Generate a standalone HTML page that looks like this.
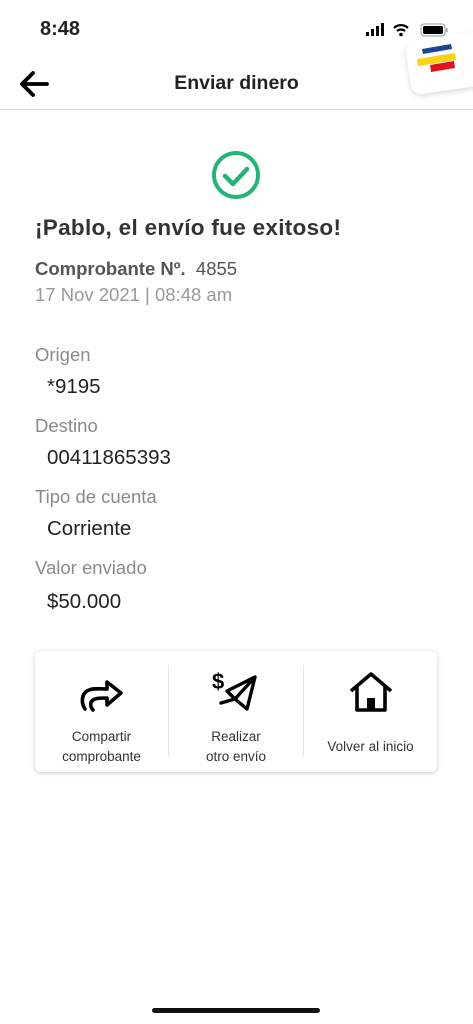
<!DOCTYPE html>
<html><head><meta charset="utf-8"><style>
*{margin:0;padding:0;box-sizing:border-box}
body{width:473px;height:1024px;background:#fff;font-family:"Liberation Sans",sans-serif;position:relative;overflow:hidden;color:#222}
.a{position:absolute;white-space:nowrap}
.lbl{font-size:18.5px;color:#8a8a8a;left:35px}
.val{font-size:20.5px;color:#222;left:47px}
.card{position:absolute;left:35px;top:651px;width:402px;height:121px;border-radius:6px;box-shadow:0 1px 5px rgba(0,0,0,.22);background:#fff}
.cap{position:absolute;font-size:13.5px;color:#333;text-align:center;line-height:20px}
.div{position:absolute;top:14px;width:1px;height:92px;background:#e6e6e6}
</style></head><body>
<div class="a" style="left:40px;top:18px;font-size:20px;font-weight:bold">8:48</div>
<svg class="a" style="left:366px;top:22px" width="90" height="18" viewBox="0 0 90 18">
<rect x="0" y="10" width="3" height="4" fill="#000"/><rect x="5" y="7" width="3" height="7" fill="#000"/><rect x="10" y="4" width="3" height="10" fill="#000"/><rect x="15" y="1" width="3" height="13" fill="#000"/>
<path d="M28 6a10 10 0 0 1 14 0M31 9a6 6 0 0 1 8 0" stroke="#000" stroke-width="2.2" fill="none"/><circle cx="35" cy="12.5" r="1.8" fill="#000"/>
<rect x="55" y="2" width="24" height="12" rx="3" fill="none" stroke="#999"/><rect x="57" y="4" width="20" height="8" rx="1.5" fill="#000"/><rect x="80" y="6" width="1.5" height="4" fill="#999"/>
</svg>
<div class="a" style="left:408px;top:36px;width:80px;height:54px;background:#fff;border-radius:10px;box-shadow:0 2px 6px rgba(0,0,0,.15);transform:rotate(-8deg)"></div>
<svg class="a" style="left:414px;top:40px" width="48" height="36" viewBox="0 0 48 36">
<path d="M8 9 L37 4 L38 9 L9 14Z" fill="#1c4596"/><path d="M3 19 L41 13 L42 20 L4 26Z" fill="#fcd116"/><path d="M16 25 L40 21 L41 28 L17 32Z" fill="#e0141f"/></svg>
<svg class="a" style="left:18px;top:70px" width="32" height="28" viewBox="0 0 32 28"><path d="M29 14H5M15 3L4 14l11 11" stroke="#000" stroke-width="3.8" fill="none" stroke-linecap="round" stroke-linejoin="round"/></svg>
<div class="a" style="left:0;width:473px;text-align:center;top:72px;font-size:19.5px;font-weight:bold">Enviar dinero</div>
<div class="a" style="left:0;top:109px;width:473px;height:1px;background:#ddd"></div>
<svg class="a" style="left:210px;top:149px" width="52" height="52" viewBox="0 0 52 52"><circle cx="26" cy="26" r="22" fill="none" stroke="#25b37a" stroke-width="4"/><path d="M15 27l8 8 14-15" stroke="#25b37a" stroke-width="4.5" fill="none" stroke-linecap="round" stroke-linejoin="round"/></svg>
<div class="a" style="left:35px;top:215px;font-size:22.5px;font-weight:bold;color:#333;letter-spacing:0.3px">¡Pablo, el envío fue exitoso!</div>
<div class="a" style="left:35px;top:258px;font-size:18.5px;color:#555"><b>Comprobante Nº.</b>&nbsp; 4855</div>
<div class="a" style="left:35px;top:284px;font-size:18.5px;color:#999">17 Nov 2021 | 08:48 am</div>
<div class="a lbl" style="top:344px">Origen</div><div class="a val" style="top:375px">*9195</div>
<div class="a lbl" style="top:415px">Destino</div><div class="a val" style="top:446px">00411865393</div>
<div class="a lbl" style="top:486px">Tipo de cuenta</div><div class="a val" style="top:517px">Corriente</div>
<div class="a lbl" style="top:557px">Valor enviado</div><div class="a val" style="top:590px">$50.000</div>
<div class="card">
<div class="div" style="left:133px"></div><div class="div" style="left:268px"></div>
<svg class="a" style="left:44px;top:22px" width="48" height="42" viewBox="0 0 48 42"><path d="M6 36C2 30 2 20 10 17c5-2 10-1 18-1V9l14 11-14 12v-7c-6 0-11 0-14 2-4 3-2 8 0 10" stroke="#000" stroke-width="3.6" fill="none" stroke-linejoin="round" stroke-linecap="round"/></svg>
<svg class="a" style="left:176px;top:18px" width="50" height="48" viewBox="0 0 50 48"><text x="1" y="20" font-family="Liberation Sans" font-weight="bold" font-size="22" fill="#000">$</text><path d="M16 22L44 8 36 40 24 30 16 22zM24 30l20-22M10 34l14-4" stroke="#000" stroke-width="3.4" fill="none" stroke-linejoin="round" stroke-linecap="round"/></svg>
<svg class="a" style="left:312px;top:20px" width="48" height="44" viewBox="0 0 48 44"><path d="M4 20L24 3l20 17M10 16v23h28V16" stroke="#000" stroke-width="3.6" fill="none" stroke-linejoin="round"/><rect x="20" y="27" width="8" height="12" fill="#000"/></svg>
<div class="cap" style="left:0;width:133px;top:76px">Compartir<br>comprobante</div>
<div class="cap" style="left:134px;width:134px;top:76px">Realizar<br>otro envío</div>
<div class="cap" style="left:269px;width:133px;top:86px">Volver al inicio</div>
</div>
<div class="a" style="left:152px;top:1008px;width:168px;height:5px;border-radius:3px;background:#111"></div>
</body></html>
